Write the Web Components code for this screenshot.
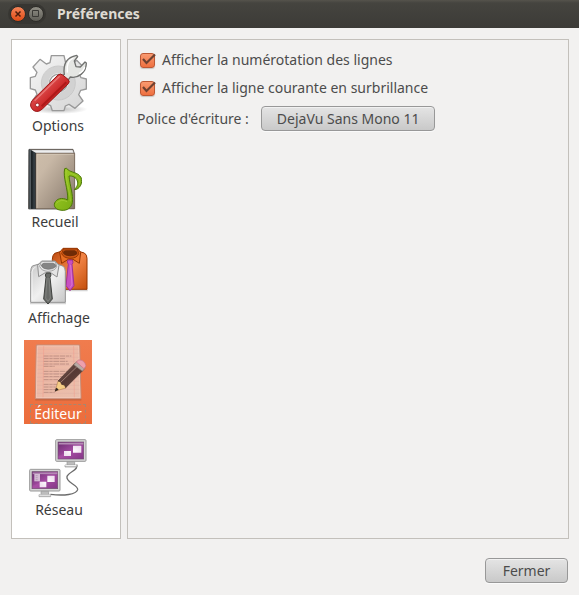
<!DOCTYPE html>
<html lang="fr">
<head>
<meta charset="utf-8">
<title>Préférences</title>
<style>
html, body { height: 100%; margin: 0; }
body { background: #f2f1f0; color: #4c4c4c; font: 14px/20px "Noto Sans", "Open Sans", sans-serif; }
</style>
</head>
<body>
<prefs-window></prefs-window>

<template id="icon-options">
<svg width="60" height="64" viewBox="39 21 180 192" aria-hidden="true">
  <defs>
    <linearGradient id="g" x1="0" y1="0" x2="1" y2="1"><stop offset="0" stop-color="#f6f6f6"/><stop offset="1" stop-color="#d4d4d4"/></linearGradient>
    <linearGradient id="r" x1="0" y1="0" x2="1" y2="1"><stop offset="0" stop-color="#c32020"/><stop offset=".4" stop-color="#d94444"/><stop offset=".6" stop-color="#c92425"/><stop offset="1" stop-color="#a81212"/></linearGradient>
    <radialGradient id="s"><stop offset="0" stop-color="#777" stop-opacity=".5"/><stop offset="1" stop-color="#777" stop-opacity="0"/></radialGradient>
  </defs>
  <ellipse cx="130" cy="193" rx="88" ry="14" fill="url(#s)"/>
  <path d="M109 32H147L152 54L165 60L185 46L205 66L193 87L198 98L214 102V132L197 136L191 149L204 168L180 190L162 178L151 183L147 197H112L107 182L93 176L76 190L53 167L66 148L61 135L46 131V98L61 94L66 82L54 66L75 43L94 57L105 53ZM130 88A26 26 0 1 0 130 140A26 26 0 1 0 130 88Z" fill="url(#g)" fill-rule="evenodd" stroke="#999" stroke-width="4" stroke-linejoin="round"/>
  <circle cx="130" cy="114" r="40" fill="none" stroke="#d2d2d2" stroke-width="20"/>
  <circle cx="130" cy="114" r="51" fill="none" stroke="#bdbdbd" stroke-width="2"/>
  <path d="M148 88C144 60 154 37 185 31L188 35L178 48L183 65L196 66L210 51L214 54C214 82 190 101 166 96L158 107L138 94Z" fill="#e5e6e3" stroke="#70716f" stroke-width="4" stroke-linejoin="round"/>
  <path d="M157 83C154 61 160 45 175 39M192 86C201 81 207 75 209 66" fill="none" stroke="#fff" stroke-width="4"/>
  <path d="M51 167L129 90Q136 84 143 90L159 103Q166 110 160 116L83 191Q70 204 57 197Q40 185 51 167Z" fill="url(#r)" stroke="#9a1818" stroke-width="3"/>
  <path d="M59 167L134 94" fill="none" stroke="#e87876" stroke-width="4"/>
  <path d="M80 184L154 112" fill="none" stroke="#ae1919" stroke-width="6"/>
  <circle cx="67" cy="180" r="5.5" fill="#fff" stroke="#861010" stroke-width="2"/>
</svg>
</template>

<template id="icon-recueil">
<svg width="54" height="64" viewBox="39 24 162 192" aria-hidden="true">
  <defs>
    <linearGradient id="c" x1="0" y1="0" x2="1" y2="1"><stop offset="0" stop-color="#cdbdaa"/><stop offset=".25" stop-color="#c8b8a6"/><stop offset="1" stop-color="#85776a"/></linearGradient>
    <linearGradient id="b"><stop offset="0" stop-color="#14191c"/><stop offset=".2" stop-color="#6a7277"/><stop offset=".4" stop-color="#171d20"/><stop offset=".75" stop-color="#394247"/><stop offset="1" stop-color="#1b2226"/></linearGradient>
    <linearGradient id="n" x1="0" y1="0" x2="1" y2="1"><stop offset="0" stop-color="#a5d32a"/><stop offset="1" stop-color="#70a40d"/></linearGradient>
  </defs>
  <path d="M42 28H174L178 40V206H41Z" fill="#6b6158" stroke="#4b4540" stroke-width="2"/>
  <path d="M45 30H173L176 39H61L49 38Z" fill="#eee" stroke="#888" stroke-width="1"/>
  <path d="M41 30Q42 26 47 29L63 39V207H41Z" fill="url(#b)"/>
  <path d="M63 40H179V206H63Z" fill="url(#c)" stroke="#715f50" stroke-width="2"/>
  <path d="M66 204V43H176" fill="none" stroke="#dacdbe" stroke-width="2"/>
  <path d="M41 208H155" stroke="#777" stroke-opacity=".5" stroke-width="3"/>
  <path d="M149 86Q154 82 159 89C168 98 188 96 198 112C205 130 193 149 178 149C186 141 190 132 187 123C184 112 172 107 162 108C165 139 175 163 172 188C169 204 156 212 141 211C123 210 115 200 119 189C125 176 140 171 158 180C160 148 143 113 149 86Z" fill="url(#n)" stroke="#4d7807" stroke-width="3" stroke-linejoin="round"/>
  <path d="M154 91C149 119 166 153 166 184M124 190Q138 175 156 185M166 100C184 105 199 115 193 134" fill="none" stroke="#a9cd3c" stroke-width="2"/>
</svg>
</template>

<template id="icon-affichage">
<svg width="62" height="64" viewBox="39 24 186 192" aria-hidden="true">
  <defs>
    <linearGradient id="o" x1="0" y1="0" x2="1" y2="1"><stop offset="0" stop-color="#bd4b0e"/><stop offset=".5" stop-color="#f18345"/><stop offset="1" stop-color="#c44f0c"/></linearGradient>
    <linearGradient id="w" x1="0" y1="0" x2="1" y2="1"><stop offset="0" stop-color="#c9c9c9"/><stop offset=".5" stop-color="#f0f0f0"/><stop offset="1" stop-color="#c7c7c7"/></linearGradient>
  </defs>
  <path d="M112 163H218M45 202H153" stroke="#888" stroke-opacity=".35" stroke-width="5"/>
  <path d="M139 46L119 52Q112 58 112 70L113 160H216V67Q216 56 208 51L191 46Z" fill="url(#o)" stroke="#943400" stroke-width="3"/>
  <path d="M144 37H187L197 49L193 82L174 70H160L140 82L134 49Z" fill="#e86e23" stroke="#943400" stroke-width="3" stroke-linejoin="round"/>
  <path d="M145 39H187L191 53Q186 67 165 67Q146 66 140 53Z" fill="#ce5715" stroke="#973600" stroke-width="3"/>
  <path d="M144 52Q144 43 153 43H179Q187 45 187 53Q180 61 165 61Q151 61 144 52Z" fill="#702b06"/>
  <path d="M157 78L159 72H172L174 79L171 85L177 149L165 164L153 149L160 85Z" fill="#c850c0" stroke="#9c3399" stroke-width="3" stroke-linejoin="round"/>
  <path d="M167 87L171 147L165 155" fill="none" stroke="#e18bdd" stroke-width="2"/>
  <path d="M72 84L52 90Q47 96 47 109V199H151V106Q151 94 143 90L126 84Z" fill="url(#w)" stroke="#929292" stroke-width="3"/>
  <path d="M80 75H120L132 88L126 123L107 110H91L71 122L68 88Z" fill="#e4e4e4" stroke="#8e8e8e" stroke-width="3" stroke-linejoin="round"/>
  <path d="M79 77H121L125 91Q121 105 99 106Q79 105 74 91Z" fill="#eee" stroke="#a1a1a1" stroke-width="3"/>
  <path d="M79 90Q80 82 87 82H114Q122 83 123 91Q115 100 100 100Q85 100 79 90Z" fill="#858585" stroke="#6e6e6e" stroke-width="2"/>
  <path d="M91 117L94 111H106L108 117L105 124L112 189L99 204L86 189L93 124Z" fill="#686a67" stroke="#40423f" stroke-width="3" stroke-linejoin="round"/>
  <path d="M96 126L92 186L99 196L106 186L102 126" fill="none" stroke="#8c8e8b" stroke-width="2"/>
  <path d="M51 192V108Q52 96 62 93" fill="none" stroke="#fff" stroke-width="2"/>
</svg>
</template>

<template id="icon-editeur">
<svg width="60" height="64" viewBox="39 24 180 192" aria-hidden="true">
  <defs>
    <linearGradient id="p" x1="0" y1="0" x2="1" y2="1"><stop offset="0" stop-color="#f0b49f"/><stop offset="1" stop-color="#e9c0ae"/></linearGradient>
    <linearGradient id="e" x1="0" y1="0" x2="1" y2="1"><stop offset="0" stop-color="#836058"/><stop offset=".5" stop-color="#553934"/><stop offset="1" stop-color="#6c473e"/></linearGradient>
  </defs>
  <path d="M61 203H199" stroke="#713b27" stroke-opacity=".3" stroke-width="5"/>
  <path d="M64 39H194L198 200H61Z" fill="url(#p)" stroke="#c58d78" stroke-width="3"/>
  <path d="M67 42H191L195 197H64Z" fill="none" stroke="#f3cdbf" stroke-width="2"/>
  <path d="M68 52H191M67 64H192M67 76H192M67 88H192M67 100H192M67 112H192M67 124H193M66 136H193M66 148H193M66 160H194M66 172H194M65 184H194" stroke="#dba9a2" stroke-width="1"/>
  <path d="M86 42L84 196M176 42L178 196" stroke="#f29a8a" stroke-width="1.500"/>
  <path d="M86 72H169M86 80H151M86 88H158M86 96H163M86 103H119M86 118H159M86 126H158M86 134H145M86 143H129M86 157H145M86 165H122M86 173H132M86 181H119" stroke="#a1776e" stroke-opacity=".6" stroke-width="3" stroke-dasharray="15 2 10 2 18 2"/>
  <path d="M121 177L129 147L137 149L140 157L149 159L153 168Z" fill="#f4cd86" stroke="#aa7541" stroke-width="1.500"/>
  <path d="M119 179L123 167Q128 168 131 173Z" fill="#332523"/>
  <path d="M129 147L179 95L204 115L152 167L149 159L140 157L137 149Z" fill="url(#e)" stroke="#44302a" stroke-width="2"/>
  <path d="M138 150L187 103" stroke="#9b7a70" stroke-width="3"/>
  <path d="M176 98L185 89L210 109L202 118Z" fill="#b7aaa4" stroke="#756963" stroke-width="2"/>
  <path d="M184 90Q190 80 201 85Q212 91 213 102L207 110Z" fill="#eda0ad" stroke="#c57180" stroke-width="2"/>
</svg>
</template>

<template id="icon-reseau">
<svg width="62" height="64" viewBox="39 24 186 192" aria-hidden="true">
  <defs>
    <linearGradient id="v" x1="0" y1="0" x2="1" y2="1"><stop offset="0" stop-color="#6a2c6f"/><stop offset=".5" stop-color="#a04a9f"/><stop offset="1" stop-color="#6e2a76"/></linearGradient>
    <radialGradient id="k"><stop offset="0" stop-color="#fff"/><stop offset="1" stop-color="#f1e2f1"/></radialGradient>
    <g id="monitor">
      <path d="M41 72H57V77H64V83H29V77H40Z" fill="#ccc" stroke="#999" stroke-width="2"/>
      <rect x="1" y="1" width="91" height="65" rx="3" fill="#d6d6d6" stroke="#999" stroke-width="3"/>
      <rect x="8" y="8" width="77" height="51" fill="url(#v)" stroke="#71506f" stroke-width="2"/>
      <path d="M10 13H84" stroke="#b48ab4" stroke-width="5"/>
      <path d="M9 50L84 18V58H9Z" fill="#c25bb9" opacity=".25"/>
      <path d="M35 67H58V77H35Z" fill="#bdbdbd" stroke="#999" stroke-width="2"/>
      <path d="M30 77H63V80H30Z" fill="#eee"/>
    </g>
  </defs>
  <path d="M185 110C193 124 163 131 156 145C151 164 190 170 188 185C184 200 147 204 106 199" fill="none" stroke="#6c6c6c" stroke-width="4"/>
  <use href="#monitor" x="121" y="34"/>
  <use href="#monitor" x="43" y="123"/>
  <path d="M174 53H199V74H174ZM147 69H168V84H147Z" fill="url(#k)"/>
  <path d="M97 143H119V162H97ZM74 161H94V178H74Z" fill="url(#k)"/>
  <path d="M58 138H75V160H58Z" fill="#d4bbd4"/>
  <path d="M62 143H68M62 149H68M62 155H68" stroke="#a88aa9" stroke-width="2"/>
</svg>
</template>

<script>
class PrefsWindow extends HTMLElement {
  connectedCallback() {
    this.attachShadow({ mode: 'open' }).innerHTML = `
<style>
:host { display: flex; flex-direction: column; min-height: 100%; }
main { flex: 1; display: grid; grid-template-columns: 110px 1fr; grid-template-rows: 1fr auto; gap: 19px 6px; padding: 11px 10px 12px 11px; }
footer { grid-column: 1 / -1; display: flex; justify-content: flex-end; padding-right: 1px; }
.row { display: flex; align-items: center; gap: 12px; }
</style>
<title-bar>Préférences</title-bar>
<main>
  <side-nav>
    <nav-item icon="options">Options</nav-item>
    <nav-item icon="recueil">Recueil</nav-item>
    <nav-item icon="affichage">Affichage</nav-item>
    <nav-item icon="editeur" selected>Éditeur</nav-item>
    <nav-item icon="reseau">Réseau</nav-item>
  </side-nav>
  <settings-panel>
    <check-row>Afficher la numérotation des lignes</check-row>
    <check-row>Afficher la ligne courante en surbrillance</check-row>
    <div class="row"><span>Police d'écriture :</span><push-button>DejaVu Sans Mono 11</push-button></div>
  </settings-panel>
  <footer><push-button>Fermer</push-button></footer>
</main>`;
  }
}

class TitleBar extends HTMLElement {
  connectedCallback() {
    this.attachShadow({ mode: 'open' }).innerHTML = `
<style>
:host { display: flex; align-items: center; height: 28px; padding-left: 8px; background: linear-gradient(#55534c, #45443f 3px, #3c3b37); color: #dfdbd2; font-weight: bold; }
.controls { display: flex; gap: 2px; padding: 2px; border-radius: 12px; background: #373632; margin-right: 11px; }
button { display: block; width: 16px; height: 16px; padding: 0; border: 1px solid #2e2d29; border-radius: 50%; background: linear-gradient(#918f86, #5e5d56); }
button.close { background: linear-gradient(#f58458, #df4c16); }
svg { display: block; }
h1 { margin: 0; font: inherit; }
</style>
<div class="controls">
<button class="close" aria-label="Fermer la fenêtre"><svg width="14" height="14" viewBox="0 0 14 14"><path d="M4.500 4.500L9.500 9.500M9.500 4.500L4.500 9.500" stroke="#4b1d0c" stroke-width="1.500"/></svg></button>
<button aria-label="Agrandir"><svg width="14" height="14" viewBox="0 0 14 14"><path d="M3.500 3.500H9.500V9.500H3.500Z" fill="none" stroke="#3a3935"/></svg></button>
</div>
<h1><slot></slot></h1>`;
  }
}

class SideNav extends HTMLElement {
  connectedCallback() {
    this.attachShadow({ mode: 'open' }).innerHTML = `
<style>:host { display: flex; flex-direction: column; align-items: flex-start; gap: 12px; padding: 12px; background: #fff; border: 1px solid #c3c0bb; color: #3c3c3c; }</style>
<slot></slot>`;
  }
}

class NavItem extends HTMLElement {
  connectedCallback() {
    const root = this.attachShadow({ mode: 'open' });
    root.innerHTML = `
<style>
:host { display: block; }
button { display: flex; flex-direction: column; align-items: center; padding: 0 4px; border: 0; background: none; color: inherit; font: inherit; }
svg { display: block; }
span { height: 20px; white-space: nowrap; }
:host([selected]) button { background: linear-gradient(#f07c4e, #ec6d3c); color: #fff; }
:host([selected]) span { outline: 1px dashed #a8866f; outline-offset: -1px; padding: 0 4px; }
</style>
<button><span><slot></slot></span></button>`;
    const icon = document.getElementById('icon-' + this.getAttribute('icon'));
    root.querySelector('button').prepend(icon.content.cloneNode(true));
    if (this.hasAttribute('selected')) root.querySelector('button').setAttribute('aria-current', 'page');
  }
}

class SettingsPanel extends HTMLElement {
  connectedCallback() {
    this.attachShadow({ mode: 'open' }).innerHTML = `
<style>:host { display: flex; flex-direction: column; gap: 8px; padding: 10px 9px; border: 1px solid #c3c0bb; }</style>
<slot></slot>`;
  }
}

class CheckRow extends HTMLElement {
  connectedCallback() {
    this.attachShadow({ mode: 'open' }).innerHTML = `
<style>
:host { display: block; padding-left: 2px; }
label { display: flex; align-items: center; gap: 5px; }
.box { display: grid; }
.box > * { grid-area: 1 / 1; }
input { appearance: none; box-sizing: border-box; width: 15px; height: 15px; margin: 1px 2px 0 1px; border: 1px solid #bd5834; border-radius: 3px; background: linear-gradient(#f99a71, #ee7040); box-shadow: 0 1px 1px #c8c4c0; }
svg { display: none; pointer-events: none; }
input:checked + svg { display: block; }
</style>
<label><span class="box"><input type="checkbox" checked><svg width="18" height="17" viewBox="0 0 18 17" aria-hidden="true"><path d="M4 7L7.500 11L16 2.500" fill="none" stroke="#6e4130" stroke-width="2.200"/></svg></span><span><slot></slot></span></label>`;
  }
}

class PushButton extends HTMLElement {
  connectedCallback() {
    this.attachShadow({ mode: 'open' }).innerHTML = `
<style>
:host { display: block; }
button { display: block; height: 25px; min-width: 83px; padding: 0 15px; border: 1px solid #989898; border-radius: 4px; background: linear-gradient(#e4e4e4, #c9c9c9); box-shadow: inset 0 1px #f1f1f1, 0 1px #fafafa; color: #4c4c4c; font: inherit; }
</style>
<button><slot></slot></button>`;
  }
}

customElements.define('title-bar', TitleBar);
customElements.define('side-nav', SideNav);
customElements.define('nav-item', NavItem);
customElements.define('settings-panel', SettingsPanel);
customElements.define('check-row', CheckRow);
customElements.define('push-button', PushButton);
customElements.define('prefs-window', PrefsWindow);
</script>
</body>
</html>
